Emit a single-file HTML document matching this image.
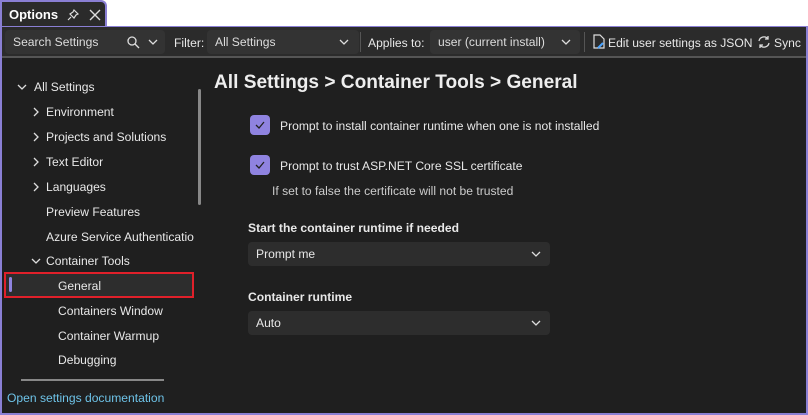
<!DOCTYPE html>
<html><head><style>
*{margin:0;padding:0;box-sizing:border-box}
body{width:808px;height:415px;background:#fff;font-family:"Liberation Sans",sans-serif;color:#e8e8e8;font-size:12.1px;position:relative;overflow:hidden}
.tab{position:absolute;left:0;top:0;width:107px;height:28px;background:#2b2b2b;border:2px solid #8a7fd4;border-bottom:none;border-radius:0 6px 0 0}
.tab b{position:absolute;left:7px;top:5px;font-size:13px;color:#fff}
.frame{position:absolute;left:0;top:26px;width:808px;height:389px;background:#1f1f1f;border:2px solid #8a7fd4;border-top-width:1px}
.tb{position:absolute;left:0;top:0;width:100%;height:31px;background:#2b2b2b;border-bottom:2px solid #555}
.in{position:absolute;top:3px;height:24px;background:#333;border-radius:4px;padding:5px 8px;color:#ddd}
.t{position:absolute;white-space:nowrap}
.abs{position:absolute}
.chk{position:absolute;width:20px;height:20px;background:#8f83e0;border-radius:4px}
.dd{position:absolute;left:246px;width:302px;height:24px;background:#2d2d2d;border-radius:4px;padding:5px 8px}
.ch{position:absolute}
</style></head><body>
<div class="tab"><b>Options</b>
<svg class="abs" style="left:64px;top:6px" width="14" height="14" viewBox="0 0 14 14" fill="none" stroke="#ddd" stroke-width="1.2"><path d="M8 2l4 4-2 1-2 3-4-4 3-2z M5 9l-3 3"/></svg>
<svg class="abs" style="left:86px;top:6px" width="14" height="14" viewBox="0 0 14 14" stroke="#ddd" stroke-width="1.4"><path d="M2 2l10 10M12 2L2 12"/></svg>
</div>
<div class="frame">
<div class="tb">
<div class="in" style="left:3px;width:160px">Search Settings</div>
<svg class="abs" style="left:124px;top:8px" width="14" height="14" viewBox="0 0 14 14" fill="none" stroke="#ddd" stroke-width="1.3"><circle cx="6" cy="6" r="4"/><path d="M9 9l4 4"/></svg>
<svg class="abs" style="left:146px;top:12px" width="10" height="6" viewBox="0 0 10 6" fill="none" stroke="#ddd" stroke-width="1.3"><path d="M1 1l4 4 4-4"/></svg>
<div class="t" style="left:172px;top:9px">Filter:</div>
<div class="in" style="left:205px;width:152px">All Settings</div>
<svg class="abs" style="left:337px;top:12px" width="10" height="6" viewBox="0 0 10 6" fill="none" stroke="#ddd" stroke-width="1.3"><path d="M1 1l4 4 4-4"/></svg>
<div class="abs" style="left:358px;top:5px;width:1px;height:20px;background:#555"></div>
<div class="t" style="left:366px;top:9px">Applies to:</div>
<div class="in" style="left:428px;width:150px">user (current install)</div>
<svg class="abs" style="left:559px;top:12px" width="10" height="6" viewBox="0 0 10 6" fill="none" stroke="#ddd" stroke-width="1.3"><path d="M1 1l4 4 4-4"/></svg>
<div class="abs" style="left:582px;top:5px;width:1px;height:20px;background:#555"></div>
<svg class="abs" style="left:590px;top:7px" width="14" height="16" viewBox="0 0 14 16" fill="none" stroke="#ddd" stroke-width="1.2"><path d="M2 1h6l4 4v9H2z"/><path d="M6 14l5-5" stroke="#4aa3ff" stroke-width="2"/></svg>
<div class="t" style="left:606px;top:9px">Edit user settings as JSON</div>
<svg class="abs" style="left:755px;top:8px" width="14" height="14" viewBox="0 0 14 14" fill="none" stroke="#ddd" stroke-width="1.3"><path d="M11 4A5 5 0 0 0 2 6M3 10a5 5 0 0 0 9-2M11 1v3H8M3 13v-3h3"/></svg>
<div class="t" style="left:772px;top:9px">Sync</div>
</div>
<!-- tree -->
<svg class="abs" style="left:15px;top:57px" width="10" height="6" viewBox="0 0 10 6" fill="none" stroke="#ddd" stroke-width="1.3"><path d="M1 1l4 4 4-4"/></svg>
<div class="t" style="left:32px;top:53px">All Settings</div>
<svg class="ch" style="left:31px;top:80px" width="6" height="10" viewBox="0 0 6 10" fill="none" stroke="#ddd" stroke-width="1.3"><path d="M1 1l4 4-4 4"/></svg><div class="t" style="left:44px;top:78px">Environment</div>
<svg class="ch" style="left:31px;top:105px" width="6" height="10" viewBox="0 0 6 10" fill="none" stroke="#ddd" stroke-width="1.3"><path d="M1 1l4 4-4 4"/></svg><div class="t" style="left:44px;top:103px">Projects and Solutions</div>
<svg class="ch" style="left:31px;top:130px" width="6" height="10" viewBox="0 0 6 10" fill="none" stroke="#ddd" stroke-width="1.3"><path d="M1 1l4 4-4 4"/></svg><div class="t" style="left:44px;top:128px">Text Editor</div>
<svg class="ch" style="left:31px;top:155px" width="6" height="10" viewBox="0 0 6 10" fill="none" stroke="#ddd" stroke-width="1.3"><path d="M1 1l4 4-4 4"/></svg><div class="t" style="left:44px;top:153px">Languages</div>
<div class="t" style="left:44px;top:178px">Preview Features</div>
<div class="t" style="left:44px;top:203px;width:148px;overflow:hidden">Azure Service Authentication</div>
<svg class="abs" style="left:29px;top:231px" width="10" height="6" viewBox="0 0 10 6" fill="none" stroke="#ddd" stroke-width="1.3"><path d="M1 1l4 4 4-4"/></svg>
<div class="t" style="left:44px;top:227px">Container Tools</div>
<div class="abs" style="left:2px;top:245px;width:190px;height:26px;background:#2d2d2d;border:2px solid #e0202a"></div>
<div class="abs" style="left:7px;top:250px;width:3px;height:15px;background:#8f83e0;border-radius:2px"></div>
<div class="t" style="left:56px;top:252px">General</div>
<div class="t" style="left:56px;top:277px">Containers Window</div>
<div class="t" style="left:56px;top:302px">Container Warmup</div>
<div class="t" style="left:56px;top:326px">Debugging</div>
<div class="abs" style="left:19px;top:352px;width:143px;height:2px;background:#888"></div>
<div class="t" style="left:5px;top:364px;color:#6ec3e8">Open settings documentation</div>
<div class="abs" style="left:196px;top:62px;width:3px;height:116px;background:#888;border-radius:2px"></div>
<!-- content -->
<div class="t" style="left:212px;top:45px;font-size:19.1px;font-weight:bold;color:#eee">All Settings &gt; Container Tools &gt; General</div>
<div class="chk" style="left:248px;top:88px"></div>
<svg class="abs" style="left:252px;top:93px" width="12" height="10" viewBox="0 0 12 10" fill="none" stroke="#222" stroke-width="1.3"><path d="M2 5l3 3 5-6"/></svg>
<div class="t" style="left:278px;top:92px">Prompt to install container runtime when one is not installed</div>
<div class="chk" style="left:248px;top:128px"></div>
<svg class="abs" style="left:252px;top:133px" width="12" height="10" viewBox="0 0 12 10" fill="none" stroke="#222" stroke-width="1.3"><path d="M2 5l3 3 5-6"/></svg>
<div class="t" style="left:278px;top:132px">Prompt to trust ASP.NET Core SSL certificate</div>
<div class="t" style="left:270px;top:157px;color:#ccc">If set to false the certificate will not be trusted</div>
<div class="t" style="left:246px;top:194px;font-weight:bold">Start the container runtime if needed</div>
<div class="dd" style="top:215px">Prompt me</div>
<svg class="abs" style="left:529px;top:224px" width="10" height="6" viewBox="0 0 10 6" fill="none" stroke="#ddd" stroke-width="1.3"><path d="M1 1l4 4 4-4"/></svg>
<div class="t" style="left:246px;top:263px;font-weight:bold">Container runtime</div>
<div class="dd" style="top:284px">Auto</div>
<svg class="abs" style="left:529px;top:293px" width="10" height="6" viewBox="0 0 10 6" fill="none" stroke="#ddd" stroke-width="1.3"><path d="M1 1l4 4 4-4"/></svg>
</div>
</body></html>
